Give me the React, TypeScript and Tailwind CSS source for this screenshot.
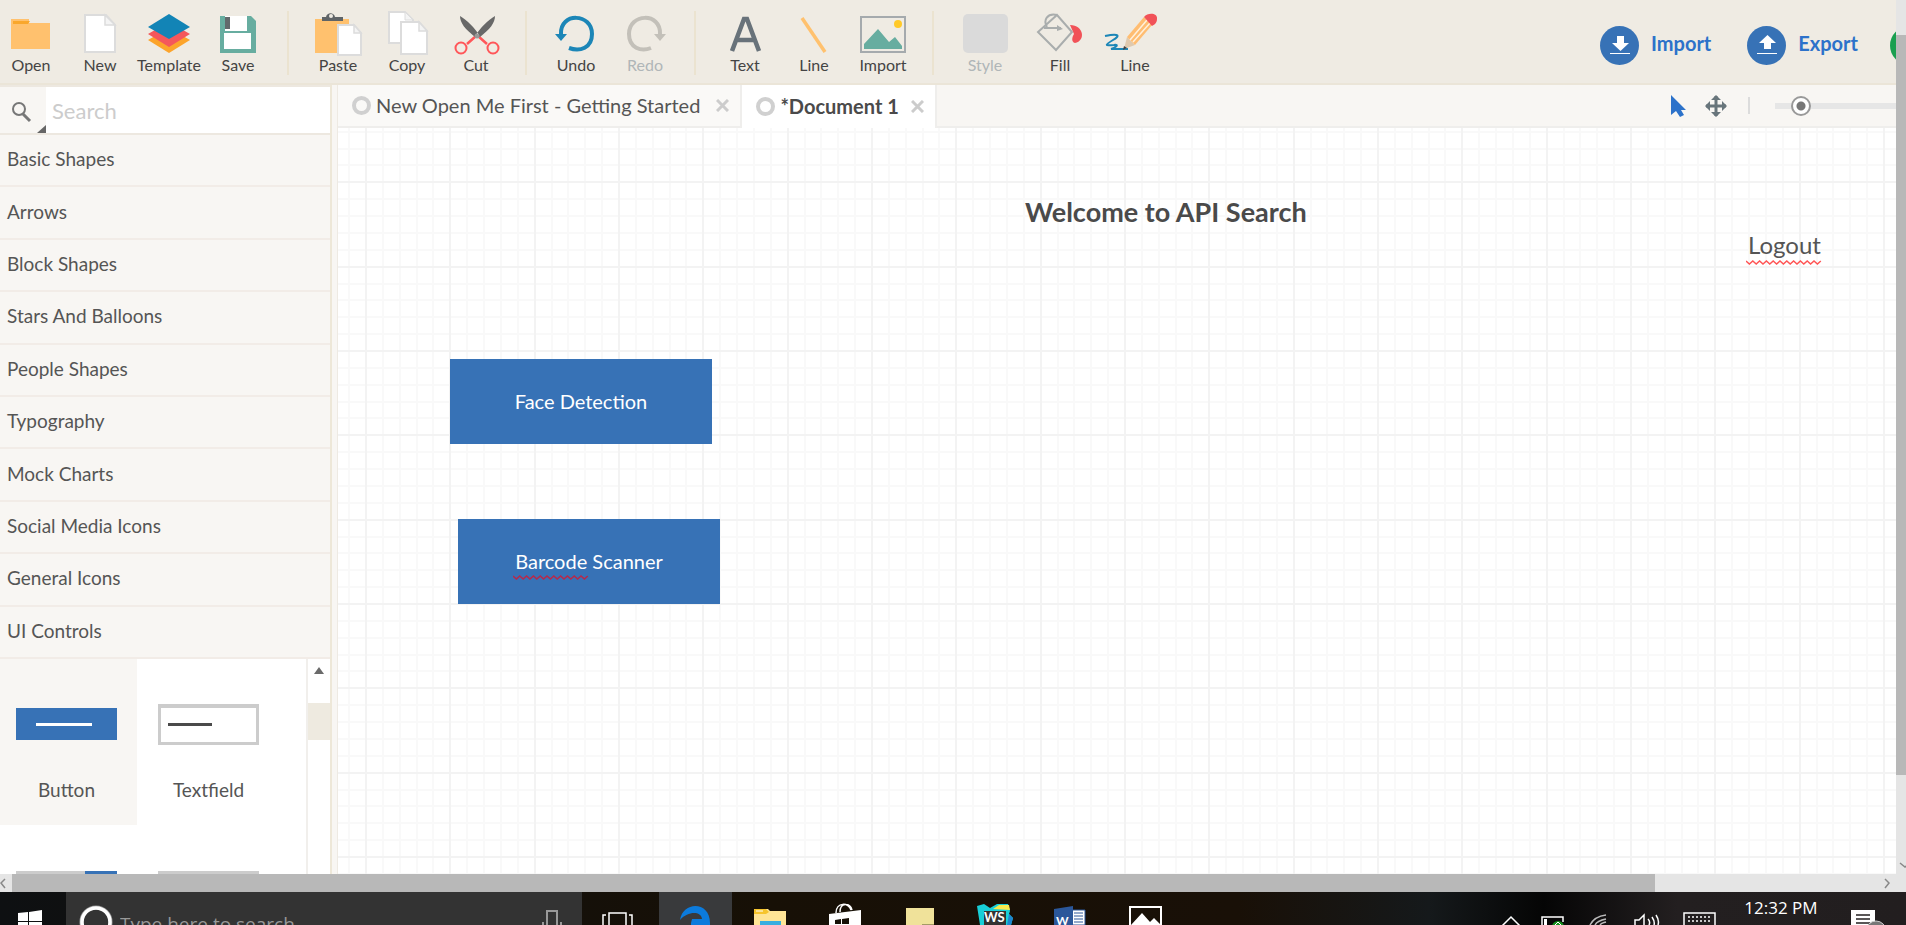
import type { ReactNode } from "react";

const categories = [
  "Basic Shapes",
  "Arrows",
  "Block Shapes",
  "Stars And Balloons",
  "People Shapes",
  "Typography",
  "Mock Charts",
  "Social Media Icons",
  "General Icons",
  "UI Controls",
];

function Tool({ label, disabled, children }: { label: string; disabled?: boolean; children: ReactNode }) {
  return (
    <button type="button" disabled={disabled} className="flex w-[62px] flex-col items-center text-[#444] disabled:text-[#b0b6b8]">
      <svg viewBox="0 0 62 45" className="h-[45px] w-[62px]" fill="none" aria-hidden="true">
        {children}
      </svg>
      <span className="text-base leading-[18px]">{label}</span>
    </button>
  );
}

function ToolGroup({ children, last }: { children: ReactNode; last?: boolean }) {
  return (
    <div className={last ? "flex h-[64px] gap-[13px] pl-5" : "flex h-[64px] gap-[7px] border-r-2 border-[#ebe3d0] px-[18px] first:pl-0"}>
      {children}
    </div>
  );
}

function Toolbar() {
  return (
    <header className="flex h-[85px] shrink-0 items-start overflow-hidden border-b-2 border-[#ebe5d8] bg-[#efebe3] pt-[11px]">
      <ToolGroup>
        <Tool label="Open">
          <path d="M11 8h18v4h21v26H11z" fill="#ffc16e" />
          <path d="M13 10h17l-2 3H13z" fill="#f9a72c" />
        </Tool>
        <Tool label="New">
          <path d="M16 4h21l9 10v27H16z" fill="#fff" stroke="#dcdcdc" strokeWidth="2" />
          <path d="M36 4v10h10z" fill="#f4f4f4" stroke="#dcdcdc" strokeWidth="1.5" />
        </Tool>
        <Tool label="Template">
          <path d="M10 29l21-12 21 12-21 13z" fill="#fca42b" />
          <path d="M10 23l21-12 21 12-21 13z" fill="#f4575b" />
          <path d="M10 16L31 3l21 13-21 12z" fill="#1284b6" />
        </Tool>
        <Tool label="Save">
          <path d="M13 5h31l5 5v32H13z" fill="#67ada0" />
          <path d="M18 5h22v15H18zM17 22h27v16H17z" fill="#fff" />
          <path d="M18 6h5v12h-5z" fill="#62696c" />
        </Tool>
      </ToolGroup>
      <ToolGroup>
        <Tool label="Paste">
          <path d="M8 8h34v34H8z" fill="#ffc16e" />
          <path d="M15 10V6h4c1-5 8-5 9 0h8v4z" fill="#5f6467" />
          <circle cx="24" cy="5" r="2" fill="#efebe3" />
          <path d="M31 14h16l7 8v22H31z" fill="#fff" stroke="#dcdcdc" strokeWidth="2" />
          <path d="M47 14v8h7z" fill="#f4f4f4" stroke="#dcdcdc" strokeWidth="1.5" />
        </Tool>
        <Tool label="Copy">
          <path d="M13 1h16l8 8v23H13z" fill="#fff" stroke="#dcdcdc" strokeWidth="2" />
          <path d="M29 1v8h8z" fill="#f4f4f4" stroke="#dcdcdc" />
          <path d="M25 11h18l8 9v23H25z" fill="#fff" stroke="#dcdcdc" strokeWidth="2" />
          <path d="M43 11v9h8z" fill="#f4f4f4" stroke="#dcdcdc" strokeWidth="1.5" />
        </Tool>
        <Tool label="Cut">
          <path d="M31 25l-9 8M33 25l9 8" stroke="#ff5659" strokeWidth="2.500" />
          <circle cx="16" cy="37" r="5.5" stroke="#ff5659" strokeWidth="2" />
          <circle cx="48" cy="37" r="5.5" stroke="#ff5659" strokeWidth="2" />
          <path d="M15 5c0 7 5 13 15 21l4-2C30 17 22 9 15 5zM50 5c0 7-5 13-15 21l-4-2C35 17 43 9 50 5z" fill="#686868" />
          <circle cx="32" cy="25" r="2.5" fill="#999" />
        </Tool>
      </ToolGroup>
      <ToolGroup>
        <Tool label="Undo">
          <path d="M16 23C15 1 47 2 47 23c0 14-12 18-23 14" stroke="#1c86b7" strokeWidth="4" />
          <path d="M10 23h12l-6 7z" fill="#1c86b7" />
        </Tool>
        <Tool label="Redo" disabled>
          <path d="M46 23C47 1 15 2 15 23c0 14 12 18 22 14" stroke="#c3c0b9" strokeWidth="4" />
          <path d="M52 23H40l6 7z" fill="#c3c0b9" />
        </Tool>
      </ToolGroup>
      <ToolGroup>
        <Tool label="Text">
          <path d="M18 40L30 8h3l12 32M22 29h19" stroke="#68727a" strokeWidth="4.5" />
        </Tool>
        <Tool label="Line">
          <path d="M19 7l23 34" stroke="#ffc16e" strokeWidth="3.5" />
        </Tool>
        <Tool label="Import">
          <path d="M9 6h44v35H9z" stroke="#a5aaad" strokeWidth="2" />
          <circle cx="46" cy="13" r="4" fill="#ffc928" />
          <path d="M12 38v-5l14-15 11 13 6-5 7 9v3z" fill="#67ada0" />
        </Tool>
      </ToolGroup>
      <ToolGroup last>
        <Tool label="Style" disabled>
          <rect x="9" y="3" width="45" height="39" rx="5" fill="#dadada" />
        </Tool>
        <Tool label="Fill">
          <path d="M41 14c14 0 16 16 5 18-4-1-3-6-1-9z" fill="#f15258" />
          <path d="M28 4l15 17-16 18L9 21zM28 4c-10-2-14 5-10 12M15 17h17" stroke="#a9adad" strokeWidth="2" />
          <path d="M28 14l6 4-6 2z" fill="#a9adad" />
        </Tool>
        <Tool label="Line">
          <path d="M1 25c15-3 15 0 8 4-8 5-9 6 1 5 6-1 1 3-3 4h17" stroke="#1c86b7" strokeWidth="2" />
          <path d="M20 38l3-12 8 8z" fill="#dfc9ae" />
          <path d="M23 26L40 6l8 8-17 20z" fill="#ffbd72" />
          <path d="M26 29L43 9M29 31L46 12" stroke="#fff0dc" strokeWidth="1.5" />
          <path d="M40 6c4-5 14-4 13 2 0 4-3 6-5 7z" fill="#f15258" />
          <path d="M20 35l-1 4 4-2z" fill="#444" />
        </Tool>
      </ToolGroup>
      <div className="ml-auto flex shrink-0 items-center pt-[15px] text-xl leading-6 font-bold text-[#2c72ca]">
        <button type="button" className="mr-9 flex items-center gap-3">
          <svg viewBox="0 0 39 39" className="size-[39px]" aria-hidden="true">
            <circle cx="19.5" cy="19.5" r="19.5" fill="#3772b6" />
            <path d="M17 10h7v7h5l-8.500 8-8.500-8h5zM10 27h20v1H10z" fill="#fff" />
          </svg>
          <span className="pb-[6px]">Import</span>
        </button>
        <button type="button" className="mr-8 flex items-center gap-3">
          <svg viewBox="0 0 39 39" className="size-[39px]" aria-hidden="true">
            <circle cx="19.5" cy="19.5" r="19.5" fill="#3772b6" />
            <path d="M17 23h7v-6h5l-8.500-8-8.500 8h5zM10 27h20v1H10z" fill="#fff" />
          </svg>
          <span className="pb-[6px]">Export</span>
        </button>
        <div className="w-[6px] overflow-hidden">
          <div className="size-[39px] rounded-full bg-[#1a9f50]" />
        </div>
      </div>
    </header>
  );
}

function Sidebar() {
  return (
    <aside className="flex w-[338px] shrink-0 border-r border-[#eeeae3] bg-[#f8f6f3]">
      <div className="flex w-[332px] flex-col border-r-2 border-[#ede7d8]">
        <div className="flex h-[50px] shrink-0 border-y-2 border-[#ede8e0]">
          <button type="button" aria-label="Search options" className="flex w-[46px] items-end justify-end">
            <svg viewBox="0 0 46 46" className="size-[46px]" fill="none" aria-hidden="true">
              <circle cx="19" cy="22" r="6" stroke="#777" strokeWidth="2" />
              <path d="M23 27l7 7" stroke="#777" strokeWidth="3" />
              <path d="M46 38v8h-9z" fill="#666" />
            </svg>
          </button>
          <input
            type="text"
            aria-label="Search shapes"
            placeholder="Search"
            className="min-w-0 flex-1 bg-white pl-[6px] text-[22px] text-[#444] outline-none placeholder:text-[#ccc]"
          />
        </div>
        <nav className="flex h-[524px] shrink-0 flex-col">
          {categories.map((name) => (
            <button
              key={name}
              type="button"
              className="flex-1 border-b-2 border-[#f2ece7] pb-[2px] pl-[7px] text-left text-[19px] leading-6 text-[#555]"
            >
              {name}
            </button>
          ))}
        </nav>
        <div className="flex min-h-0 flex-1 overflow-hidden bg-white text-[19px] leading-6 text-[#555]">
          <div className="grid flex-1 auto-rows-[166px] grid-cols-[137px_1fr]">
            <button type="button" className="flex flex-col items-center bg-[#f8f6f3] pt-[45px] pr-[4px]">
              <svg viewBox="0 0 101 41" className="h-[41px] w-[101px]" aria-hidden="true">
                <path d="M0 4h101v32H0z" fill="#3772b6" />
                <path d="M20 19h56v3H20z" fill="#fff" />
              </svg>
              <span className="pt-[33px]">Button</span>
            </button>
            <button type="button" className="flex flex-col items-center pt-[45px] pr-[26px]">
              <svg viewBox="0 0 101 41" className="h-[41px] w-[101px]" aria-hidden="true">
                <path d="M0 0h101v41H0z" fill="#ccc" />
                <path d="M3 4h95v34H3z" fill="#fff" />
                <path d="M10 19h44v3H10z" fill="#4a4a4a" />
              </svg>
              <span className="pt-[33px]">Textfield</span>
            </button>
            <button type="button" aria-label="Dropdown" className="flex flex-col items-center pt-[46px] pr-[4px]">
              <svg viewBox="0 0 101 41" className="h-[41px] w-[101px]" aria-hidden="true">
                <path d="M0 0h69v41H0z" fill="#ccc" />
                <path d="M69 0h32v41H69z" fill="#3772b6" />
              </svg>
            </button>
            <button type="button" aria-label="Text area" className="flex flex-col items-center pt-[46px] pr-[26px]">
              <span className="h-[41px] w-[101px] border-4 border-[#ccc]" />
            </button>
          </div>
          <div className="flex w-[24px] flex-col items-stretch border-l-2 border-[#f1efec]">
            <svg viewBox="0 0 22 44" className="h-[44px] w-[22px]" aria-hidden="true">
              <path d="M6 15h10l-5-7z" fill="#6a6a6a" />
            </svg>
            <div className="h-[37px] bg-[#eeeae0]" />
          </div>
        </div>
      </div>
      <div className="flex-1" />
    </aside>
  );
}

function CloseIcon() {
  return (
    <svg viewBox="0 0 13 13" className="size-[13px]" aria-hidden="true">
      <path d="M1 1l11 11M12 1L1 12" stroke="#ccc" strokeWidth="3" />
    </svg>
  );
}

function Tabs() {
  return (
    <div className="flex h-[43px] shrink-0 overflow-hidden bg-[#f8f6f3]">
      <div className="flex shrink-0 items-center border-r-2 border-b-2 border-[#efeeec] bg-[#faf9f7] pr-[11px] pl-[14px] text-xl leading-7 text-[#555]">
        <span className="mr-[5px] size-[19px] shrink-0 rounded-full border-4 border-[#d0d0d0]" />
        <button type="button" className="pb-[2px] whitespace-nowrap">New Open Me First - Getting Started</button>
        <button type="button" aria-label="Close New Open Me First" className="ml-4 shrink-0">
          <CloseIcon />
        </button>
      </div>
      <div className="flex shrink-0 items-center border-r-2 border-[#efeeec] bg-white pr-[11px] pl-[14px] text-xl leading-7 font-bold text-[#4a4a4a]">
        <span className="mr-[5px] size-[19px] shrink-0 rounded-full border-4 border-[#d0d0d0]" />
        <button type="button" className="pb-[2px] whitespace-nowrap">*Document 1</button>
        <button type="button" aria-label="Close Document 1" className="ml-3 shrink-0">
          <CloseIcon />
        </button>
      </div>
      <div className="flex flex-1 items-center justify-end border-b-2 border-[#efeeec]">
        <button type="button" aria-label="Select" className="mr-[19px]">
          <svg viewBox="0 0 15 22" className="h-[22px] w-[15px]" aria-hidden="true">
            <path d="M0 0v20l5-4 4 6 4-2-3-5h5z" fill="#2c72ca" />
          </svg>
        </button>
        <button type="button" aria-label="Move" className="mr-[21px]">
          <svg viewBox="0 0 22 22" className="size-[22px]" aria-hidden="true">
            <path d="M11 1v20M1 11h20" stroke="#68757b" strokeWidth="3" />
            <path d="M11 0l5 5H6zM11 22l5-5H6zM0 11l5-5v10zM22 11l-5-5v10z" fill="#68757b" />
          </svg>
        </button>
        <span className="mr-[25px] h-[17px] w-[2px] bg-[#dcdcdc]" />
        <div className="w-[121px] overflow-hidden">
          <input
            type="range"
            aria-label="Zoom"
            defaultValue={9}
            className="block h-5 w-[200px] appearance-none bg-transparent [&::-webkit-slider-runnable-track]:h-[6px] [&::-webkit-slider-runnable-track]:bg-[#e6e6e6] [&::-webkit-slider-thumb]:mt-[-7px] [&::-webkit-slider-thumb]:size-5 [&::-webkit-slider-thumb]:appearance-none [&::-webkit-slider-thumb]:rounded-full [&::-webkit-slider-thumb]:border-2 [&::-webkit-slider-thumb]:border-[#999] [&::-webkit-slider-thumb]:bg-[radial-gradient(circle,#777_4px,#fff_5px)]"
          />
        </div>
      </div>
    </div>
  );
}

function Squiggle({ color, count }: { color: string; count: number }) {
  const points = Array.from({ length: count + 1 }, (_, i) => `${i * 3.4},${i % 2 ? 4 : 1}`).join(" ");
  return (
    <svg className="absolute top-full -left-[2px] h-[5px] w-[calc(100%+4px)]" aria-hidden="true">
      <polyline points={points} fill="none" stroke={color} strokeWidth="1.500" />
    </svg>
  );
}

const minorLines = [17, 34, 51, 67, 101, 118, 135, 152, 186, 202, 219, 236];
const majorLines = [0, 84, 169];

function GridLines({ at, color }: { at: number[]; color: string }) {
  return (
    <g fill={color}>
      {at.map((n) => (
        <g key={n}>
          <rect x={n} width="2" height="253" />
          <rect y={n} width="253" height="2" />
        </g>
      ))}
    </g>
  );
}

function Canvas() {
  return (
    <section className="relative min-h-0 flex-1 overflow-hidden bg-white">
      <svg className="absolute size-full" aria-hidden="true">
        <defs>
          <pattern id="grid" x="27" y="-31" width="253" height="253" patternUnits="userSpaceOnUse">
            <GridLines at={minorLines} color="#f9f9f9" />
            <GridLines at={majorLines} color="#f3f3f3" />
          </pattern>
        </defs>
        <rect width="100%" height="100%" fill="url(#grid)" />
      </svg>
      <h1 className="absolute top-[68px] left-[687px] text-[27px] leading-8 font-bold whitespace-nowrap text-[#4a4a4a]">
        Welcome to API Search
      </h1>
      <a href="#logout" className="absolute top-[102px] left-[1410px] text-2xl leading-[30px] text-[#555]">
        Logout
        <Squiggle color="#f55" count={22} />
      </a>
      <button type="button" className="absolute top-[231px] left-[112px] h-[85px] w-[262px] bg-[#3772b6] pb-[2px] text-xl text-white">
        Face Detection
      </button>
      <button type="button" className="absolute top-[391px] left-[120px] h-[85px] w-[262px] bg-[#3772b6] pb-[2px] text-xl text-white">
        <span className="relative inline-block">
          Barcode
          <Squiggle color="#b8284a" count={22} />
        </span>{" "}
        Scanner
      </button>
    </section>
  );
}

function TaskIcon({ className, children }: { className: string; children: ReactNode }) {
  return (
    <svg viewBox="0 0 40 33" className={"h-[33px] w-[40px] shrink-0 " + className} fill="none" aria-hidden="true">
      {children}
    </svg>
  );
}

function Taskbar() {
  return (
    <footer className="flex h-[33px] shrink-0 items-start overflow-hidden bg-[linear-gradient(90deg,#0e1012_0%,#171006_40%,#191007_65%,#15191b_75%,#050505_81%,#231f20_88%,#221e1f_100%)]">
      <TaskIcon className="mr-[16px] ml-[10px]">
        <path d="M8 21l10-1v9H8zM19 20l13-2v11H19zM8 30h10v3H8zM19 30h13v3H19z" fill="#fff" />
      </TaskIcon>
      <div className="flex h-full w-[516px] bg-[#333]">
        <TaskIcon className="ml-[10px]">
          <circle cx="20" cy="30" r="14.500" stroke="#999" strokeWidth="4" />
          <circle cx="20" cy="30" r="14" stroke="#fff" strokeWidth="3.500" />
        </TaskIcon>
        <input
          type="text"
          aria-label="Type here to search"
          placeholder="Type here to search"
          className="mt-[16px] ml-1 h-8 min-w-0 flex-1 bg-transparent font-['Open_Sans',sans-serif] text-[19px] outline-none placeholder:text-[#999]"
        />
        <TaskIcon className="mr-[10px]">
          <path d="M15 33V19h10v14M11 33v-3M29 33v-3" stroke="#999" strokeWidth="2" />
        </TaskIcon>
      </div>
      <TaskIcon className="mr-[21px] ml-[16px]">
        <path d="M11 33V21h17v12M8 23H5v10M31 23h3v10" stroke="#fff" strokeWidth="1.500" />
      </TaskIcon>
      <div className="flex h-full w-[73px] justify-center bg-[#393a3c]">
        <TaskIcon className="">
          <path d="M4 28C7 9 34 9 34 31v2H15v-2l1-4h10c-1-8-14-8-22 1z" fill="#0c7bdc" />
        </TaskIcon>
      </div>
      <TaskIcon className="mr-[35px] ml-[18px]">
        <path d="M4 17h14l2 2h16v14H4z" fill="#ffe596" />
        <path d="M4 17h12l3 3-3 2H4z" fill="#f6c52e" />
        <path d="M6 19h7" stroke="#fff" />
        <path d="M10 29h21v4H10z" fill="#38aee0" />
      </TaskIcon>
      <TaskIcon className="mr-[35px]">
        <path d="M4 22l32-4v15H4z" fill="#fff" />
        <path d="M11 21c0-11 13-11 15-3M15 20c0-10 10-9 12-2" stroke="#fff" strokeWidth="1.500" />
        <path d="M10 28l6-1v5h-6zM17 27l7-1v6h-7z" fill="#171006" />
      </TaskIcon>
      <TaskIcon className="mr-[35px]">
        <path d="M6 16h28v17H6z" fill="#f0e29a" />
        <path d="M34 32H22v1h12z" fill="#a49b65" />
      </TaskIcon>
      <TaskIcon className="mr-[35px]">
        <path d="M2 14l7-2 6 4 7-4h11l2 7-1 3 4 4-2 7H5z" fill="#18cfd8" />
        <path d="M18 17l6-4h10l1 5z" fill="#f7e94e" />
        <path d="M34 22l4 4-2 7h-4z" fill="#1c86d0" />
        <path d="M9 19h22v14H9z" fill="#333" />
        <text x="9" y="30" fontSize="13" fontWeight="700" fill="#fff" fontFamily="Lato, sans-serif">
          WS
        </text>
      </TaskIcon>
      <TaskIcon className="mr-[35px]">
        <path d="M22 18h13v15H22z" fill="#fff" stroke="#2b579a" />
        <path d="M24 21h9M24 24h9M24 27h9M24 30h9" stroke="#2b579a" />
        <path d="M4 17l19-3v19H4z" fill="#2b579a" />
        <text x="6" y="33" fontSize="12" fontWeight="700" fill="#fff" fontFamily="Lato, sans-serif">
          W
        </text>
      </TaskIcon>
      <TaskIcon className="">
        <path d="M5 34V15h31v19" stroke="#fff" strokeWidth="2" />
        <path d="M6 33l11-12 8 9 4-4 6 6v1z" fill="#fff" />
      </TaskIcon>
      <div className="ml-auto flex shrink-0">
        <TaskIcon className="mr-[5px]">
          <path d="M11 34l9-9 9 9" stroke="#fff" strokeWidth="1.500" />
        </TaskIcon>
        <TaskIcon className="mr-[8px]">
          <path d="M6 34V25h21v5" stroke="#fff" strokeWidth="1.500" />
          <path d="M8 27h3v6h-3z" fill="#fff" />
          <circle cx="22" cy="35" r="6" fill="#16911e" />
          <path d="M19 33l3-3 3 3" stroke="#fff" />
        </TaskIcon>
        <TaskIcon className="mr-[8px]">
          <path d="M6 33c3-6 8-9 16-10M11 33c2-4 6-5 11-6M16 33c1-2 3-2 6-3" stroke="#bbb" strokeWidth="1.500" />
        </TaskIcon>
        <TaskIcon className="mr-[8px]">
          <path d="M3 33v-5h4l5-5v10M16 27c2 2 2 4 1 6M20 25c2 3 3 5 2 8M24 23c2 3 3 7 2 10" stroke="#fff" strokeWidth="1.500" />
        </TaskIcon>
        <TaskIcon className="mr-[24px]">
          <path d="M4 34V21h31v13" stroke="#fff" strokeWidth="1.500" />
          <path d="M8 25h24M8 29h24" stroke="#fff" strokeWidth="1.500" strokeDasharray="2 2" />
        </TaskIcon>
        <time className="w-[74px] pt-1 text-center font-['Open_Sans',sans-serif] text-[17px] leading-6 whitespace-nowrap text-white">12:32 PM</time>
        <TaskIcon className="mr-[22px] ml-[26px]">
          <path d="M7 18h24v15H7z" fill="#fff" />
          <path d="M12 23h14M12 27h14M12 31h14" stroke="#231f20" strokeWidth="1.500" />
          <circle cx="32" cy="39" r="10" fill="#777" stroke="#ccc" />
        </TaskIcon>
      </div>
    </footer>
  );
}

export default function App() {
  return (
    <div className="flex h-screen flex-col overflow-hidden font-[Lato,sans-serif]">
      <div className="flex min-h-0 flex-1">
        <div className="flex min-w-0 flex-1 flex-col">
          <Toolbar />
          <main className="flex min-h-0 flex-1">
            <Sidebar />
            <div className="flex min-w-0 flex-1 flex-col">
              <Tabs />
              <Canvas />
            </div>
          </main>
        </div>
        <div className="flex w-[10px] shrink-0 flex-col overflow-hidden bg-[#e5e5e5] pt-[35px]">
          <div className="h-[740px] bg-[#b8b8b8]" />
          <svg viewBox="0 0 10 18" className="mt-auto h-[18px] w-[10px]" fill="none" aria-hidden="true">
            <path d="M4 7l5 4 5-4" stroke="#888" strokeWidth="1.500" />
          </svg>
        </div>
      </div>
      <div className="flex h-[18px] shrink-0 bg-[#e5e5e5] pr-3">
        <svg viewBox="0 0 12 18" className="h-[18px] w-[12px]" fill="none" aria-hidden="true">
          <path d="M5 5L1 9l4 5" stroke="#888" strokeWidth="1.500" />
        </svg>
        <div className="mr-[227px] flex-1 bg-[#b8b8b8]" />
        <svg viewBox="0 0 12 18" className="h-[18px] w-[12px]" fill="none" aria-hidden="true">
          <path d="M3 5l4 4-4 5" stroke="#888" strokeWidth="1.500" />
        </svg>
      </div>
      <Taskbar />
    </div>
  );
}
